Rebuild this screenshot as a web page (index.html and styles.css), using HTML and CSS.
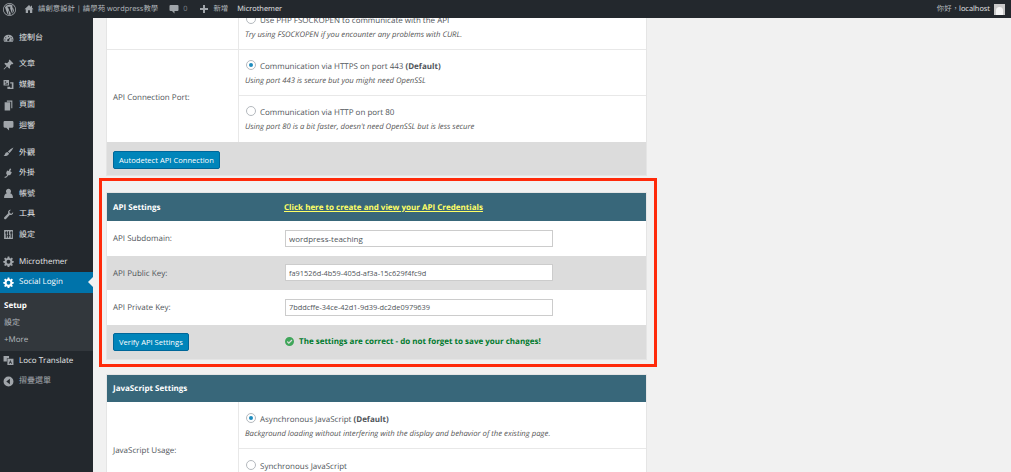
FILE: index.html
```html
<!DOCTYPE html>
<html lang="zh-Hant">
<head>
  <meta charset="UTF-8" />
  <meta name="viewport" content="width=device-width, initial-scale=1.0"/>
  <title>Social Login Setup</title>
  <link rel="stylesheet" href="styles.css">
</head>
<body>
  <!-- icons -->
  <svg class="defs" aria-hidden="true">
    <symbol id="i-wp" viewBox="0 0 20 20"><path fill-rule="evenodd" d="M10 0a10 10 0 1 1 0 20a10 10 0 0 1 0-20zM10 1.2a8.800 8.800 0 1 0 0 17.600a8.800 8.800 0 0 0 0-17.600zM3 6.500L7 17.500L9.300 10.800L7.800 6.800L6.700 6.600V5.800H11.800V6.600L10.600 6.800L13.300 15.200L15 10C15.600 8 15 7 14.300 6C14 5.300 14.500 4.500 15.300 4.500A8 8 0 0 0 3 6.500zM10.200 11.500L8 17.900Q10 18.400 12.200 17.700zM16.300 6.500Q16.600 8.500 15.800 10.500L13.600 17Q18.600 13 16.300 6.500z"/></symbol>
    <symbol id="i-home" viewBox="0 0 20 20"><path d="M10 2L1 10.500H3.500V18H8V12.500H12V18H16.500V10.500H19L16 7.700V3.500H14V5.800z"/></symbol>
    <symbol id="i-comment" viewBox="0 0 20 20"><path d="M3 2H17Q19 2 19 4V12Q19 14 17 14H11V19L6 14H3Q1 14 1 12V4Q1 2 3 2z"/></symbol>
    <symbol id="i-plus" viewBox="0 0 20 20"><path d="M8 2H12V8H18V12H12V18H8V12H2V8H8z"/></symbol>
    <symbol id="i-gauge" viewBox="0 0 20 20"><path fill-rule="evenodd" d="M10 3a9 9 0 0 1 9 9q0 2.500-1.200 4H2.200Q1 14.500 1 12a9 9 0 0 1 9-9zM10 5a1 1 0 1 0 0 2a1 1 0 1 0 0-2zM5 7.500a1 1 0 1 0 0 2a1 1 0 1 0 0-2zM15 7.500a1 1 0 1 0 0 2a1 1 0 1 0 0-2zM3.500 11.500a1 1 0 1 0 0 2a1 1 0 1 0 0-2zM16.500 11.500a1 1 0 1 0 0 2a1 1 0 1 0 0-2zM13.500 7.500L9.500 10.800a2 2 0 1 0 2 1.500z"/></symbol>
    <symbol id="i-pin" viewBox="0 0 20 20"><path d="M12 1L19 8L17.500 9.500L16 9L12.500 12.500L13 16L11.500 17.500L7.500 13.500L2 19L1 18L6.500 12.500L2.500 8.500L4 7L7.500 7.500L11 4L10.500 2.500z"/></symbol>
    <symbol id="i-media" viewBox="0 0 20 20"><path fill-rule="evenodd" d="M1 2H11V12H1zM4.500 4a1.500 1.500 0 1 0 0 3a1.500 1.500 0 1 0 0-3zM3 10H9V7L7 8.500L5.500 7.500zM13 6H19V18H8V14H13V16H16V8H13z"/></symbol>
    <symbol id="i-page" viewBox="0 0 20 20"><path d="M7 1H17V15H15V3H7zM3 4H13V19H3z"/></symbol>
    <symbol id="i-brush" viewBox="0 0 20 20"><path d="M19 1Q14 3 9 8L12 11Q17 6 19 1zM8 9L11 12Q10 15 7 16Q4 17 1 16Q3 15 3.500 13Q4 10 8 9z"/></symbol>
    <symbol id="i-plug" viewBox="0 0 20 20"><path d="M13 1L15 2L13 6L16 7.500L14.500 11Q13 14 9.500 13L8 15.500Q6.500 18 3 18V16Q5.500 16 6.500 14.500L7.500 12.500Q5 10.500 6 8L7.500 4.500L10.500 5.500L12 2z"/></symbol>
    <symbol id="i-user" viewBox="0 0 20 20"><path d="M10 1.500a4.500 4.500 0 0 1 3 8Q18 11 18 17V18H2V17Q2 11 7 9.500a4.500 4.500 0 0 1 3-8z"/></symbol>
    <symbol id="i-wrench" viewBox="0 0 20 20"><path d="M18.500 5.500Q19 9 16 10.500Q14 11.300 12.500 10.500L5.500 18Q4 19.500 2.500 18Q1 16.500 2.500 15L9.500 7.500Q8.700 5.500 9.700 3.700Q11.500 1 14.500 1.500L11.500 4.500L12.500 7.500L15.500 8.500z"/></symbol>
    <symbol id="i-sliders" viewBox="0 0 20 20"><path fill-rule="evenodd" d="M2 2H18V18H2zM5 4V6H4V8H5V16H7V8H8V6H7V4zM9 4V11H8V13H9V16H11V13H12V11H11V4zM14 4V6H13V8H14V16H16V8H17V6H16V4z"/></symbol>
    <symbol id="i-gear" viewBox="0 0 20 20"><path fill-rule="evenodd" d="M8.500 1H11.500L12 3.700L13.700 4.400L16 2.800L18 5L16.400 7.200L17.100 8.900L19.500 9.300V12L17.100 12.500L16.400 14.200L18 16.300L16 18.400L13.700 16.800L12 17.500L11.500 20H8.500L8 17.500L6.300 16.800L4 18.400L2 16.300L3.600 14.200L2.900 12.500L.5 12V9.300L2.900 8.900L3.600 7.200L2 5L4 2.800L6.300 4.400L8 3.700zM10 7a3.500 3.500 0 1 0 0 7a3.500 3.500 0 1 0 0-7z"/></symbol>
    <symbol id="i-translate" viewBox="0 0 20 20"><path fill-rule="evenodd" d="M1 2H11V6H7V12H1zM19 7V18H8V7zM13.500 9L10.500 16H12L12.600 14.500H14.400L15 16H16.500zM13.500 11.500L14 13H13z"/></symbol>
    <symbol id="i-collapse" viewBox="0 0 20 20"><path fill-rule="evenodd" d="M10 1a9 9 0 1 1 0 18a9 9 0 0 1 0-18zM12.500 5L6 10L12.500 15z"/></symbol>
    <symbol id="i-check" viewBox="0 0 20 20"><path fill-rule="evenodd" d="M10 0a10 10 0 1 1 0 20a10 10 0 0 1 0-20zM14.500 5.500L8.500 11.500L6 9L4 11L8.500 15.500L16.500 7.500z"/></symbol>
  </svg>

  <header class="topbar">
    <div class="topbar-left">
      <svg class="bar-logo"><use href="#i-wp"/></svg>
      <span class="bar-item bar-site"><svg class="bar-icon"><use href="#i-home"/></svg>請創意設計 | 請學苑 wordpress教學</span>
      <span class="bar-item bar-count"><svg class="bar-icon"><use href="#i-comment"/></svg>0</span>
      <span class="bar-item bar-new"><svg class="bar-icon"><use href="#i-plus"/></svg>新增</span>
      <span class="bar-item bar-light">Microthemer</span>
    </div>
    <div class="topbar-right">
      <span class="bar-item">你好，<span class="bar-light">localhost</span></span>
      <span class="avatar"><span class="avatar-head"></span></span>
    </div>
  </header>

  <div class="layout">
    <nav class="sidebar">
      <div class="menu-group menu-group-first">
        <a class="menu-item"><svg><use href="#i-gauge"/></svg>控制台</a>
      </div>
      <div class="menu-group">
        <a class="menu-item"><svg><use href="#i-pin"/></svg>文章</a>
        <a class="menu-item"><svg><use href="#i-media"/></svg>媒體</a>
        <a class="menu-item"><svg><use href="#i-page"/></svg>頁面</a>
        <a class="menu-item"><svg><use href="#i-comment"/></svg>迴響</a>
      </div>
      <div class="menu-group">
        <a class="menu-item"><svg><use href="#i-brush"/></svg>外觀</a>
        <a class="menu-item"><svg><use href="#i-plug"/></svg>外掛</a>
        <a class="menu-item"><svg><use href="#i-user"/></svg>帳號</a>
        <a class="menu-item"><svg><use href="#i-wrench"/></svg>工具</a>
        <a class="menu-item"><svg><use href="#i-sliders"/></svg>設定</a>
      </div>
      <div class="menu-group">
        <a class="menu-item"><svg><use href="#i-gear"/></svg>Microthemer</a>
        <a class="menu-item active"><svg><use href="#i-gear"/></svg>Social Login</a>
        <div class="submenu">
          <a class="sub-current">Setup</a>
          <a>設定</a>
          <a>+More</a>
        </div>
        <a class="menu-item"><svg><use href="#i-translate"/></svg>Loco Translate</a>
        <a class="menu-item menu-collapse"><svg><use href="#i-collapse"/></svg>摺疊選單</a>
      </div>
    </nav>

    <main class="content">
      <section class="panel">
        <div class="row row-clipped">
          <div class="row-label"></div>
          <div class="row-value">
            <div class="option">
              <label class="radio-line"><span class="radio"></span>Use PHP FSOCKOPEN to communicate with the API</label>
              <p class="hint">Try using FSOCKOPEN if you encounter any problems with CURL.</p>
            </div>
          </div>
        </div>
        <div class="row">
          <div class="row-label">API Connection Port:</div>
          <div class="row-value">
            <div class="option">
              <label class="radio-line"><span class="radio checked"></span>Communication via HTTPS on port 443&nbsp;<b>(Default)</b></label>
              <p class="hint">Using port 443 is secure but you might need OpenSSL</p>
            </div>
            <div class="option">
              <label class="radio-line"><span class="radio"></span>Communication via HTTP on port 80</label>
              <p class="hint">Using port 80 is a bit faster, doesn't need OpenSSL but is less secure</p>
            </div>
          </div>
        </div>
        <div class="row-gray row-autodetect">
          <button class="btn">Autodetect API Connection</button>
        </div>
      </section>

      <div class="highlight">
        <section class="panel">
          <div class="panel-head">
            <span class="head-title">API Settings</span>
            <a class="head-link">Click here to create and view your API Credentials</a>
          </div>
          <div class="field">
            <span class="field-label">API Subdomain:</span>
            <input class="text-input" type="text" value="wordpress-teaching">
          </div>
          <div class="field field-gray">
            <span class="field-label">API Public Key:</span>
            <input class="text-input key-input" type="text" value="fa91526d-4b59-405d-af3a-15c629f4fc9d">
          </div>
          <div class="field">
            <span class="field-label">API Private Key:</span>
            <input class="text-input key-input" type="text" value="7bddcffe-34ce-42d1-9d39-dc2de0979639">
          </div>
          <div class="field field-gray">
            <span><button class="btn">Verify API Settings</button></span>
            <span class="status"><svg><use href="#i-check"/></svg>The settings are correct - do not forget to save your changes!</span>
          </div>
        </section>
      </div>

      <section class="panel">
        <div class="panel-head panel-head-js">
          <span class="head-title">JavaScript Settings</span>
        </div>
        <div class="row row-js">
          <div class="row-label">JavaScript Usage:</div>
          <div class="row-value">
            <div class="option">
              <label class="radio-line"><span class="radio checked"></span>Asynchronous JavaScript&nbsp;<b>(Default)</b></label>
              <p class="hint">Background loading without interfering with the display and behavior of the existing page.</p>
            </div>
            <div class="option">
              <label class="radio-line"><span class="radio"></span>Synchronous JavaScript</label>
            </div>
          </div>
        </div>
      </section>
    </main>
  </div>
</body>
</html>
```

FILE: styles.css
```css
* {
  box-sizing: border-box;
}
html, body {
  height: 100%;
}
body {
  margin: 0;
  height: 472px;
  overflow: hidden;
  background: #f1f1f1;
  color: #50555a;
  font-family: "Open Sans", "Noto Sans CJK TC", sans-serif;
  font-size: 8px;
  line-height: 12px;
  text-rendering: geometricPrecision;
}
.defs {
  display: none;
}

/* top bar */
.topbar {
  display: flex;
  justify-content: space-between;
  align-items: center;
  height: 18px;
  background: #23282d;
  color: #b4b9be;
  font-size: 7.400px;
}
.topbar-left, .topbar-right {
  display: flex;
  align-items: center;
}
.bar-logo {
  width: 13px;
  height: 13px;
  margin: 0 8px 0 3px;
  fill: #a0a5aa;
}
.bar-item {
  display: flex;
  align-items: center;
  white-space: nowrap;
}
.bar-icon {
  width: 10px;
  height: 10px;
  margin-right: 4px;
  fill: #a0a5aa;
}
.bar-site {
  margin-right: 11px;
}
.bar-count {
  margin-right: 12px;
  color: #7f858b;
}
.bar-new {
  margin-right: 9px;
}
.bar-light {
  color: #e4e6e8;
}
.topbar-right {
  padding-right: 6px;
}
.avatar {
  display: block;
  overflow: hidden;
  width: 11px;
  height: 11px;
  margin-left: 4px;
  background: #c9c9c9;
}
.avatar-head {
  display: block;
  width: 7px;
  height: 9px;
  margin: 3px auto 0;
  border-radius: 4px 4px 0 0;
  background: #f4f4f4;
}

.layout {
  display: flex;
  height: 454px;
  overflow: hidden;
}

/* admin menu */
.sidebar {
  flex: 0 0 93px;
  padding-top: 10px;
  background: #23282d;
  color: #e6e8ea;
}
.menu-group {
  margin-bottom: 6.500px;
}
.menu-group-first {
  margin-bottom: 5.500px;
}
.menu-item {
  display: flex;
  align-items: center;
  gap: 5px;
  height: 20.500px;
  padding-left: 3px;
  white-space: nowrap;
  position: relative;
}
.menu-item svg {
  width: 11px;
  height: 11px;
  flex: none;
  fill: #a0a5aa;
}
.menu-item.active {
  background: #0073aa;
  color: #fff;
}
.menu-item.active svg {
  fill: #fff;
}
.menu-item.active::after {
  content: "";
  position: absolute;
  right: 0;
  top: 5px;
  border: 5px solid transparent;
  border-right-color: #f1f1f1;
  border-left-width: 0;
}
.menu-collapse {
  color: #a0a5aa;
}
.submenu {
  display: flex;
  flex-direction: column;
  padding: 4px 0 3px 4px;
  background: #32373c;
  color: #b4b9be;
}
.submenu a {
  height: 17px;
  line-height: 17px;
}
.submenu .sub-current {
  color: #fff;
  font-weight: 700;
}

/* settings panels */
.content {
  flex: 0 0 539px;
  margin-left: 14px;
}
.panel {
  background: #fff;
  outline: 1px solid #e5e5e5;
}
.row {
  display: grid;
  grid-template-columns: 131px 1fr;
}
.row-label {
  display: flex;
  align-items: center;
  padding: 4px 0 0 6px;
}
.row-value {
  border-left: 1px solid #e8e8e8;
}
/* scrolled under the top bar, only the bottom of this row shows */
.row-clipped {
  grid-template-rows: 31px;
  height: 32px;
  overflow: hidden;
  border-bottom: 1px solid #e8e8e8;
}
.row-clipped .row-value {
  display: flex;
  flex-direction: column;
  justify-content: flex-end;
  min-height: 0;
}
.option {
  flex: none;
  height: 46px;
  padding: 10px 0 0 6px;
  border-bottom: 1px solid #e8e8e8;
}
.option:last-child {
  border-bottom: 0;
}
.row-clipped .option {
  padding-top: 11px;
}
.row-js .option {
  height: 47px;
  padding-top: 11px;
}
.radio-line {
  display: flex;
  align-items: center;
  height: 14px;
}
.radio {
  width: 10px;
  height: 10px;
  margin: -4px 4px 0 1px;
  display: flex;
  align-items: center;
  justify-content: center;
  border: 1px solid #b4b9be;
  border-radius: 50%;
  background: #fff;
}
.radio.checked::before {
  content: "";
  width: 4px;
  height: 4px;
  border-radius: 50%;
  background: #1e8cbe;
}
.hint {
  margin: 1px 0 0 0;
  font-size: 7.700px;
  font-style: italic;
  color: #555;
}
.row-gray {
  background: #dcdcdc;
}
.row-autodetect {
  height: 33px;
  padding: 9px 6px 0;
}
.btn {
  display: block;
  height: 18px;
  padding: 0 5px;
  border: 1px solid #006799;
  border-radius: 2px;
  background: #0085ba;
  color: #fff;
  font: inherit;
  font-size: 7.600px;
}

/* red marker round the API block */
.highlight {
  margin: 3px -11px 8px -8px;
  padding: 12px 8px 5px 5px;
  border: 3px solid #ff2a0a;
}
.panel-head {
  display: grid;
  grid-template-columns: 171px 1fr;
  align-items: center;
  height: 28px;
  padding: 1px 0 0 6px;
  background: #38677a;
  font-weight: 700;
}
.panel-head-js {
  height: 27px;
  grid-template-columns: 1fr;
}
.head-title {
  color: #fff;
}
.head-link {
  color: #ffff66;
  text-decoration: underline;
}
.field {
  display: grid;
  grid-template-columns: 172px 268px;
  align-items: center;
  height: 34.500px;
  padding-left: 6px;
}
.field-gray {
  background: #dcdcdc;
}
.field-label {
  padding-top: 2px;
}
.text-input {
  width: 268px;
  height: 17px;
  padding: 0 3px;
  border: 1px solid #ccc;
  border-radius: 0;
  background: #fff;
  color: #50555a;
  font: inherit;
  outline: 0;
}
.key-input {
  font-size: 7.400px;
}
.status {
  display: flex;
  align-items: center;
  gap: 5px;
  white-space: nowrap;
  color: #007a2e;
  font-weight: 700;
}
.status svg {
  width: 9px;
  height: 9px;
  flex: none;
  fill: #3fa65a;
}
```
